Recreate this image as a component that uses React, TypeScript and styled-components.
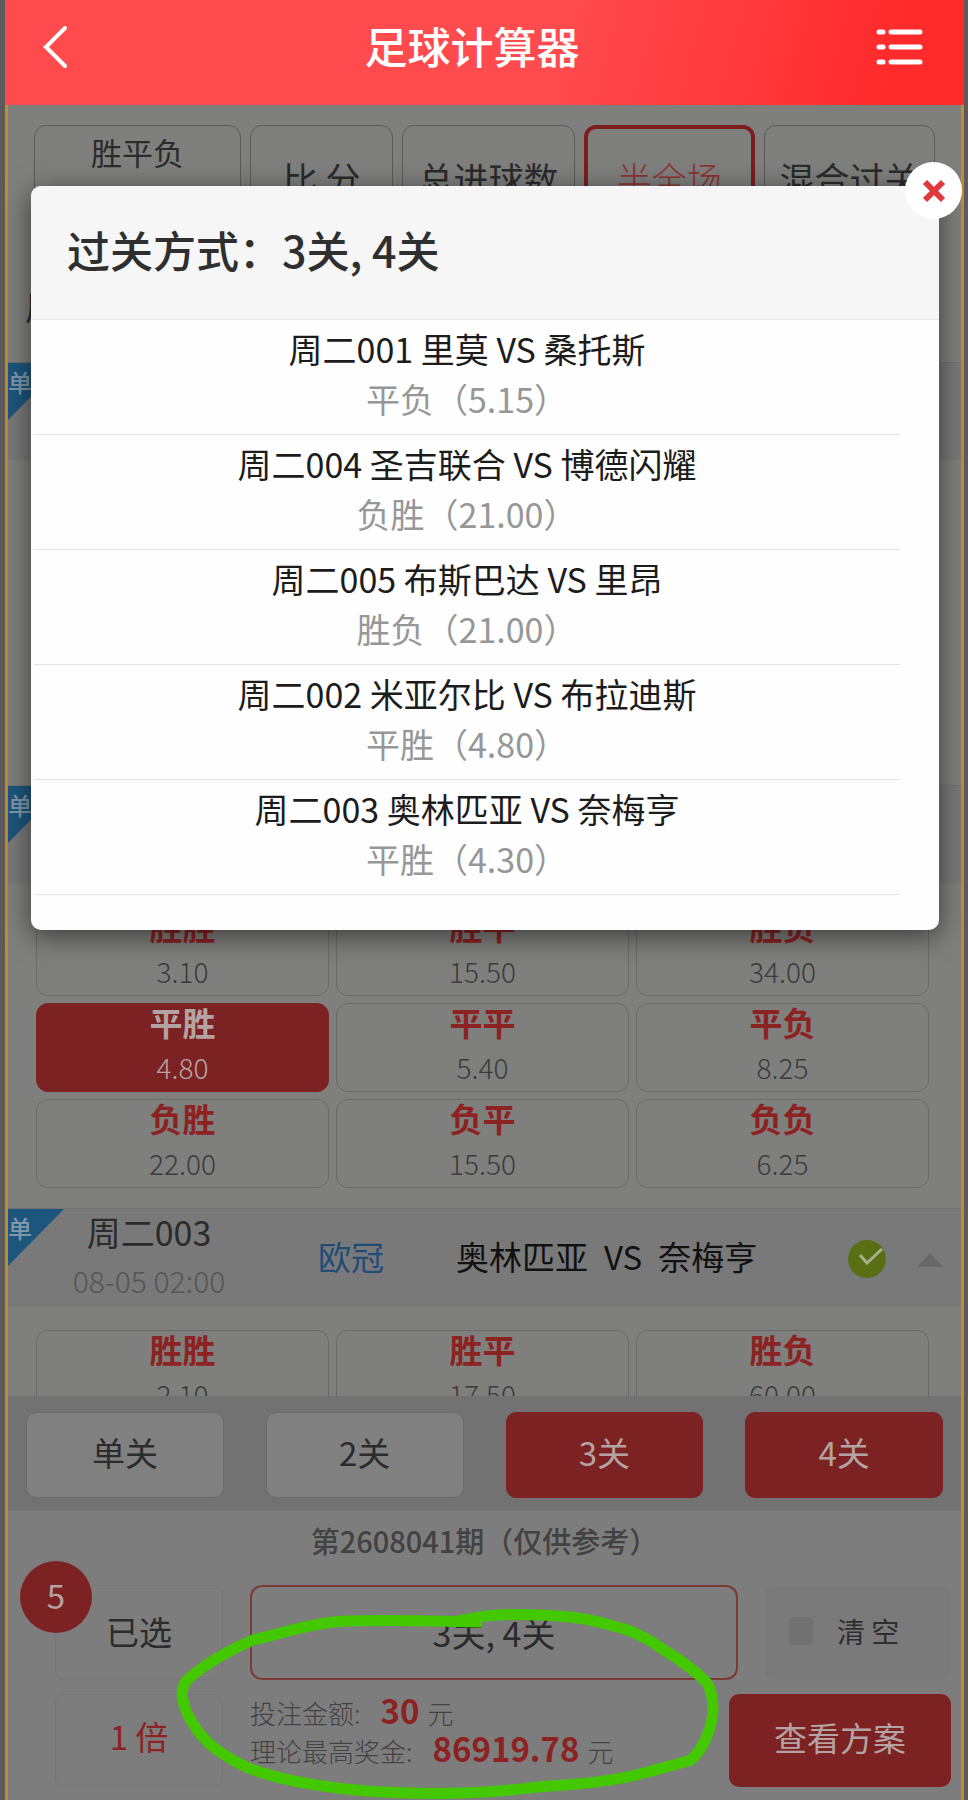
import React from 'react';
import styled, { createGlobalStyle } from 'styled-components';

const GlobalStyle = createGlobalStyle`
  * { box-sizing: border-box; }
  body {
    margin: 0;
    background: #5c5a5a;
    font-family: 'Noto Sans CJK SC', 'Noto Sans', sans-serif;
  }
  button {
    font: inherit;
    color: inherit;
    margin: 0;
    padding: 0;
    border: 0;
    background: none;
    cursor: pointer;
  }
  h1, h2, p, ul { margin: 0; padding: 0; }
  ul { list-style: none; }
`;

const Screen = styled.div`
  position: relative;
  display: flex;
  flex-direction: column;
  height: 100vh;
  margin: 0 4px 0 5px;
  overflow: hidden;
`;

const TopBar = styled.header`
  flex: none;
  display: flex;
  align-items: center;
  justify-content: space-between;
  height: 105px;
  padding: 0 41px 12px 36px;
  color: #fff;
  background: linear-gradient(105deg, #ff4a4e 58%, #ff2a2c 92%);
`;

const Title = styled.h1`
  padding-bottom: 3px;
  font-size: 43px;
  line-height: 60px;
  font-weight: 500;
`;

const IconButton = styled.button`
  display: flex;
  color: #fff;
`;

const Body = styled.div`
  flex: 1;
  min-height: 0;
  display: flex;
  flex-direction: column;
  border: solid #bd8c33;
  border-width: 0 3px;
  background: #7f7f7e;
`;

const Content = styled.main`
  flex: 1;
  min-height: 0;
  overflow: hidden;
`;

const Tabs = styled.nav`
  display: grid;
  grid-template-columns: 208fr 144fr 173fr 172fr 172fr;
  gap: 9px;
  padding: 20px 26px 0 26px;
`;

const Tab = styled.button<{ $active?: boolean; $top?: boolean }>`
  display: flex;
  align-items: ${p => (p.$top ? 'flex-start' : 'center')};
  justify-content: center;
  height: 106px;
  padding-top: ${p => (p.$top ? '2px' : '0')};
  border: ${p => (p.$active ? '4px solid #7c1d1e' : '1px solid #5b5959')};
  border-radius: 12px;
  color: ${p => (p.$active ? '#8c3431' : '#2b2b2b')};
  font-size: ${p => (p.$top ? '31px' : '35px')};
  line-height: 48px;
  font-weight: ${p => (p.$active ? 300 : 400)};
  white-space: pre;
`;

const DayRow = styled.p`
  height: 131px;
  padding: 50px 17px 0;
  color: #2b2b2b;
  font-size: 33px;
  line-height: 50px;
`;

const Match = styled.section<{ $folded?: boolean }>`
  height: ${p => (p.$folded ? '423px' : 'auto')};
  padding-bottom: 20px;
`;

const MatchHead = styled.button`
  position: relative;
  display: grid;
  grid-template-columns: 264px 148px minmax(0, 1fr) 69px 44px;
  align-items: center;
  width: 100%;
  height: 98px;
  border-top: 1px solid #727272;
  background: #797979;
  text-align: left;
`;

const Corner = styled.span`
  position: absolute;
  top: 0;
  left: 0;
  width: 56px;
  height: 57px;
  overflow: hidden;
  background: #1d567d;
  clip-path: polygon(0 0, 100% 0, 0 100%);
  color: #8097a8;
  font-size: 24px;
  font-weight: 500;
  line-height: 38px;
`;

const When = styled.span`
  display: flex;
  flex-direction: column;
  align-items: center;
  padding-left: 18px;
  color: #2b2b2b;
  font-size: 34px;
  line-height: 44px;
`;

const Kickoff = styled.time`
  color: #555;
  font-size: 30px;
  line-height: 52px;
  font-weight: 300;
`;

const League = styled.span`
  padding: 0 0 4px 46px;
  color: #204c78;
  font-size: 33px;
  line-height: 48px;
  white-space: nowrap;
`;

const Teams = styled.span`
  display: flex;
  gap: 16px;
  padding: 0 0 4px 36px;
  color: #111;
  font-size: 33px;
  line-height: 48px;
  white-space: nowrap;
`;

const OddsGrid = styled.div`
  display: grid;
  grid-template-columns: repeat(3, 1fr);
  gap: 7px;
  padding: 24px 32px 0 28px;
`;

const Odd = styled.button<{ $active?: boolean }>`
  display: flex;
  flex-direction: column;
  align-items: center;
  height: 89px;
  border: 1px solid ${p => (p.$active ? '#7c2222' : '#6a6a6a')};
  border-radius: 12px;
  background: ${p => (p.$active ? '#7c2222' : 'transparent')};
  color: ${p => (p.$active ? '#b5a3a3' : '#8c2222')};
  font-size: 33px;
  line-height: 36px;
  font-weight: 700;
`;

const OddValue = styled.span<{ $active?: boolean }>`
  color: ${p => (p.$active ? '#b5a3a3' : '#3b3b3b')};
  font-size: 28px;
  line-height: 54px;
  font-weight: 300;
`;

const Footer = styled.footer`
  position: relative;
  flex: none;
  background: #7d7d7d;
`;

const PassStrip = styled.div`
  display: grid;
  grid-template-columns: repeat(4, 1fr);
  gap: 42px;
  padding: 16px 18px 13px 18px;
  background: #727272;
`;

const Pass = styled.button<{ $active?: boolean }>`
  height: 86px;
  border-radius: 10px;
  padding-bottom: 6px;
  border: 1px solid ${p => (p.$active ? '#7c2222' : '#6a6a6a')};
  background: ${p => (p.$active ? '#7c2222' : '#808080')};
  color: ${p => (p.$active ? '#b5a3a3' : '#2b2b2b')};
  font-size: 33px;
`;

const Issue = styled.p`
  height: 62px;
  color: #424242;
  font-size: 29px;
  line-height: 58px;
  font-weight: 500;
  text-align: center;
`;

const Panel = styled.div`
  display: flex;
  flex-direction: column;
  gap: 14px;
  padding: 12px 10px 13px 47px;
`;

const PanelRow = styled.div`
  display: flex;
  gap: 27px;
`;

const SmallBox = styled.button<{ $accent?: boolean }>`
  position: relative;
  flex: none;
  width: 168px;
  height: ${p => (p.$accent ? '93px' : '95px')};
  padding-bottom: ${p => (p.$accent ? '10px' : '4px')};
  border: 1px solid #777;
  border-radius: 10px;
  color: ${p => (p.$accent ? '#8c2222' : '#2b2b2b')};
  font-size: 33px;
`;

const Badge = styled.span`
  position: absolute;
  left: -36px;
  top: -25px;
  display: flex;
  align-items: center;
  justify-content: center;
  width: 72px;
  height: 72px;
  padding-bottom: 4px;
  border-radius: 50%;
  background: #7c2222;
  color: #b5a3a3;
  font-size: 33px;
`;

const Chosen = styled.button`
  flex: 1;
  height: 95px;
  border: 2px solid #7a3a36;
  border-radius: 12px;
  color: #2b2b2b;
  font-size: 34px;
`;

const Clear = styled.button`
  flex: none;
  display: flex;
  align-items: center;
  gap: 24px;
  width: 186px;
  height: 95px;
  padding: 0 0 4px 24px;
  border-radius: 10px;
  background: #7a7a7a;
  color: #2f2f2f;
  font-size: 28px;
  white-space: pre;
`;

const Summary = styled.div`
  flex: 1;
  color: #424242;
  font-size: 26px;
  line-height: 38px;
  font-weight: 300;
  white-space: nowrap;
`;

const Amount = styled.strong`
  margin: 0 8px 0 20px;
  color: #8c2222;
  font-size: 33px;
  line-height: 30px;
  font-weight: 700;
`;

const Submit = styled.button`
  flex: none;
  width: 222px;
  height: 93px;
  padding-bottom: 8px;
  border-radius: 10px;
  background: #7c2222;
  color: #b5a3a3;
  font-size: 33px;
`;

const Marker = styled.svg`
  position: absolute;
  left: 168px;
  top: 204px;
  pointer-events: none;
`;

const Dialog = styled.div`
  position: absolute;
  top: 186px;
  left: 26px;
  right: 25px;
  border-radius: 10px;
  background: #fefefe;
  box-shadow: 0 6px 28px rgba(0, 0, 0, 0.55);
`;

const DialogTitle = styled.h2`
  height: 134px;
  padding: 30px 36px 0;
  border-bottom: 1px solid #e6e6e8;
  border-radius: 10px 10px 0 0;
  background: #f6f6f7;
  color: #2f2f2f;
  font-size: 43px;
  line-height: 66px;
  font-weight: 500;
`;

const Picks = styled.ul`
  padding: 0 39px 35px 3px;
`;

const Pick = styled.li`
  height: 115px;
  padding-top: 4px;
  border-bottom: 1px solid #e4e4e4;
  color: #1c1c1c;
  font-size: 34px;
  line-height: 50px;
  text-align: center;
`;

const PickResult = styled.p`
  color: #979797;
`;

const Close = styled.button`
  position: absolute;
  top: -24px;
  right: -23px;
  display: flex;
  align-items: center;
  justify-content: center;
  width: 57px;
  height: 57px;
  border-radius: 50%;
  background: #fff;
`;

type OddItem = { label: string; value: string; active?: boolean };

const match002Odds: OddItem[] = [
  { label: '胜胜', value: '3.10' },
  { label: '胜平', value: '15.50' },
  { label: '胜负', value: '34.00' },
  { label: '平胜', value: '4.80', active: true },
  { label: '平平', value: '5.40' },
  { label: '平负', value: '8.25' },
  { label: '负胜', value: '22.00' },
  { label: '负平', value: '15.50' },
  { label: '负负', value: '6.25' },
];

const match003Odds: OddItem[] = [
  { label: '胜胜', value: '2.10' },
  { label: '胜平', value: '17.50' },
  { label: '胜负', value: '60.00' },
];

const picks = [
  { match: '周二001 里莫 VS 桑托斯', result: '平负（5.15）' },
  { match: '周二004 圣吉联合 VS 博德闪耀', result: '负胜（21.00）' },
  { match: '周二005 布斯巴达 VS 里昂', result: '胜负（21.00）' },
  { match: '周二002 米亚尔比 VS 布拉迪斯', result: '平胜（4.80）' },
  { match: '周二003 奥林匹亚 VS 奈梅亨', result: '平胜（4.30）' },
];

const passes = [
  { label: '单关' },
  { label: '2关' },
  { label: '3关', active: true },
  { label: '4关', active: true },
];

function Odds({ items }: { items: OddItem[] }) {
  return (
    <OddsGrid>
      {items.map(o => (
        <Odd key={o.label} $active={o.active} aria-pressed={!!o.active}>
          {o.label}
          <OddValue $active={o.active}>{o.value}</OddValue>
        </Odd>
      ))}
    </OddsGrid>
  );
}

export default function App() {
  return (
    <>
      <GlobalStyle />
      <Screen>
        <TopBar>
          <IconButton aria-label="返回">
            <svg width="28" height="44" viewBox="0 0 28 44" fill="none" stroke="currentColor" strokeWidth="4" strokeLinecap="round">
              <path d="M24 3 5 22l19 19" />
            </svg>
          </IconButton>
          <Title>足球计算器</Title>
          <IconButton aria-label="菜单">
            <svg width="48" height="38" viewBox="0 0 48 38" fill="none" stroke="currentColor" strokeWidth="5" strokeLinecap="round">
              <path d="M4 4h4M16 4h29M4 19h4M16 19h29M4 34h4M16 34h29" />
            </svg>
          </IconButton>
        </TopBar>

        <Body>
          <Content>
            <Tabs>
              <Tab $top>胜平负</Tab>
              <Tab>比 分</Tab>
              <Tab>总进球数</Tab>
              <Tab $active>半全场</Tab>
              <Tab>混合过关</Tab>
            </Tabs>
            <DayRow>周二</DayRow>
            <Match $folded>
              <MatchHead aria-label="周二001">
                <Corner>单</Corner>
              </MatchHead>
            </Match>
            <Match>
              <MatchHead aria-label="周二002">
                <Corner>单</Corner>
              </MatchHead>
              <Odds items={match002Odds} />
            </Match>
            <Match>
              <MatchHead>
                <Corner>单</Corner>
                <When>
                  周二003
                  <Kickoff>08-05 02:00</Kickoff>
                </When>
                <League>欧冠</League>
                <Teams>
                  <span>奥林匹亚</span>
                  <span>VS</span>
                  <span>奈梅亨</span>
                </Teams>
                <svg width="39" height="43" viewBox="0 0 39 43" fill="none">
                  <circle cx="19" cy="23" r="19" fill="#5a6e14" />
                  <path d="M12 19l7 8L34 13" stroke="#a9b08c" strokeWidth="3" />
                </svg>
                <svg width="26" height="18" viewBox="0 0 26 18">
                  <path d="M13 4 26 18H0z" fill="#686868" />
                </svg>
              </MatchHead>
              <Odds items={match003Odds} />
            </Match>
          </Content>

          <Footer>
            <PassStrip>
              {passes.map(p => (
                <Pass key={p.label} $active={p.active} aria-pressed={!!p.active}>
                  {p.label}
                </Pass>
              ))}
            </PassStrip>
            <Issue>第2608041期（仅供参考）</Issue>
            <Panel>
              <PanelRow>
                <SmallBox>
                  已选
                  <Badge>5</Badge>
                </SmallBox>
                <Chosen>3关, 4关</Chosen>
                <Clear>
                  <svg width="24" height="28" viewBox="0 0 24 28">
                    <rect width="24" height="28" rx="5" fill="#717171" />
                  </svg>
                  清 空
                </Clear>
              </PanelRow>
              <PanelRow>
                <SmallBox $accent>1 倍</SmallBox>
                <Summary>
                  <p>
                    投注金额:<Amount>30</Amount>元
                  </p>
                  <p>
                    理论最高奖金:<Amount>86919.78</Amount>元
                  </p>
                </Summary>
                <Submit>查看方案</Submit>
              </PanelRow>
            </Panel>
            <Marker width="552" height="200" viewBox="176 1600 552 200" fill="none" stroke="#44c800" strokeWidth="11" strokeLinejoin="round" aria-hidden="true">
              <path d="M482 1622C420 1621 370 1619 333 1622C300 1626 280 1634 253 1640C225 1652 205 1664 187 1680C180 1690 181 1698 187 1713C194 1728 203 1740 217 1750C232 1760 245 1768 263 1773C290 1782 340 1790 383 1792C420 1794 450 1794 484 1792C510 1791 540 1786 564 1785C595 1783 622 1779 644 1773C662 1768 678 1764 691 1760C704 1748 712 1728 713 1710C713 1700 711 1690 707 1683C695 1670 680 1660 664 1650C650 1640 635 1631 617 1627C598 1621 577 1617 557 1616C530 1614 500 1614 480 1617L458 1621" />
            </Marker>
          </Footer>
        </Body>

        <Dialog role="dialog" aria-label="过关方式">
          <DialogTitle>过关方式：3关, 4关</DialogTitle>
          <Picks>
            {picks.map(p => (
              <Pick key={p.match}>
                {p.match}
                <PickResult>{p.result}</PickResult>
              </Pick>
            ))}
          </Picks>
          <Close aria-label="关闭">
            <svg width="24" height="24" viewBox="0 0 24 24" stroke="#e0393b" strokeWidth="6">
              <path d="M3 3l18 18M21 3 3 21" />
            </svg>
          </Close>
        </Dialog>
      </Screen>
    </>
  );
}
